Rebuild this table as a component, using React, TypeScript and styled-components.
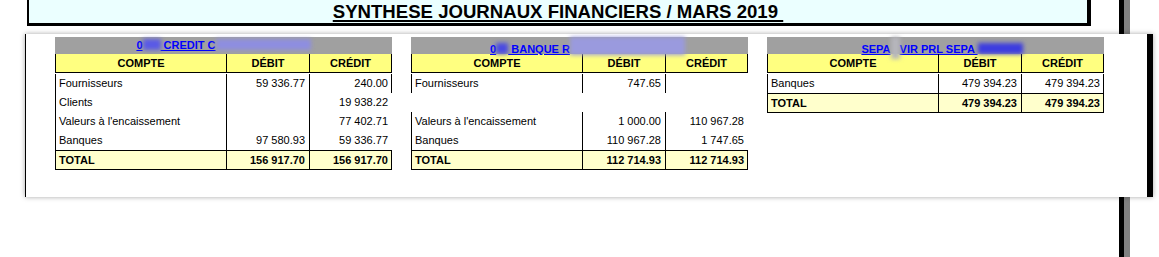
import React from "react";
import styled, { createGlobalStyle, css } from "styled-components";

const GlobalStyle = createGlobalStyle`
  html, body { margin: 0; padding: 0; background: #fff; }
  body {
    font-family: "Liberation Sans", Arial, sans-serif;
    font-size: 11px;
    color: #000;
  }
`;

const Page = styled.div`
  position: relative;
  width: 1159px;
  height: 257px;
  overflow: hidden;
`;

// window edge behind the sheet
const SideBar = styled.div`
  position: absolute;
  top: 0;
  bottom: 0;
  left: 1119px;
  width: 11px;
  box-sizing: border-box;
  border-left: 5px solid #000;
  background: #808080;
`;

const Banner = styled.div`
  margin-left: 27px;
  width: 1064px;
  height: 26px;
  box-sizing: border-box;
  background: #ebffff;
  border: solid #000;
  border-width: 0 4px 3px 2px;
  text-align: center;
`;

const Title = styled.h1`
  margin: 0;
  font-size: 18.6px;
  line-height: 23px;
  font-weight: bold;
  white-space: pre;
  text-decoration: underline;
  text-decoration-thickness: 2px;
  text-underline-offset: 2px;
`;

const Sheet = styled.div`
  position: relative;
  z-index: 1;
  margin: 8px 0 0 25px;
  width: 1128px;
  height: 163px;
  box-sizing: border-box;
  background: #fff;
  border-left: 1px solid #000;
  border-right: 6px solid #000;
  box-shadow: 0 0 5px rgba(0, 0, 0, 0.35);
  padding: 3px 0 0 29px;
  display: flex;
  gap: 19px;
  align-items: flex-start;
`;

const Journal = styled.div`
  width: 337px;
`;

const Caption = styled.div<{ $shift?: number }>`
  height: 17px;
  line-height: 17px;
  background: #a0a0a0;
  text-align: center;
  white-space: nowrap;
  padding-left: ${(p) => p.$shift ?? 0}px;
`;

const Link = styled.a`
  color: #0000ff;
  font-weight: bold;
  text-decoration: underline;
`;

// redacted part of the account label
const Blur = styled.span<{ $w: number; $c: string; $h?: number; $lift?: number }>`
  display: inline-block;
  width: ${(p) => p.$w}px;
  height: ${(p) => p.$h ?? 11}px;
  background: ${(p) => p.$c};
  filter: blur(2px);
  vertical-align: ${(p) => p.$lift ?? -1}px;
`;

type Variant = "head" | "body" | "blank" | "total";

const Line = styled.div<{ $variant: Variant }>`
  display: grid;
  grid-template-columns: 171px 83px 83px;
  height: 19px;
  line-height: 19px;
  box-sizing: border-box;

  ${(p) =>
    p.$variant === "head" &&
    css`
      background: #ffff80;
      border-bottom: 1px solid #000;
      line-height: 18px;
      font-weight: bold;
      margin-bottom: 1px;
    `}

  ${(p) =>
    p.$variant === "total" &&
    css`
      height: 20px;
      line-height: 18px;
      background: #ffffcc;
      border-top: 1px solid #000;
      border-bottom: 1px solid #000;
      font-weight: bold;
    `}
`;

const Cell = styled.div<{ $align: "left" | "center" | "right"; $edge?: boolean; $last?: boolean; $blank?: boolean }>`
  box-sizing: border-box;
  white-space: nowrap;
  overflow: hidden;
  text-align: ${(p) => p.$align};
  border-left: 1px solid ${(p) => (p.$blank ? "transparent" : "#000")};
  border-right: ${(p) => (p.$last ? `1px solid ${p.$edge ? "#000" : "transparent"}` : "none")};
  padding: ${(p) => (p.$align === "left" ? "0 0 0 3px" : p.$align === "right" ? (p.$last ? "0 3px 0 0" : "0 4px 0 0") : "0")};
`;

type Entry = { label: string; debit: string; credit: string; edge?: boolean; blank?: boolean };

type JournalData = {
  caption: React.ReactNode;
  shift?: number;
  rows: Entry[];
  total: string;
};

const journals: JournalData[] = [
  {
    caption: (
      <>
        0<Blur $w={18} $c="#5a5ae6" /> CREDIT C<Blur $w={95} $c="#8e8ee0" />
      </>
    ),
    rows: [
      { label: "Fournisseurs", debit: "59 336.77", credit: "240.00", edge: true },
      { label: "Clients", debit: "", credit: "19 938.22" },
      { label: "Valeurs à l'encaissement", debit: "", credit: "77 402.71" },
      { label: "Banques", debit: "97 580.93", credit: "59 336.77" },
    ],
    total: "156 917.70",
  },
  {
    caption: (
      <>
        0<Blur $w={12} $c="#4a4ae2" /> BANQUE R<Blur $w={115} $c="#9a9ade" $h={18} $lift={-2} />
      </>
    ),
    shift: 16,
    rows: [
      { label: "Fournisseurs", debit: "747.65", credit: "" },
      { label: "", debit: "", credit: "", blank: true },
      { label: "Valeurs à l'encaissement", debit: "1 000.00", credit: "110 967.28" },
      { label: "Banques", debit: "110 967.28", credit: "1 747.65" },
    ],
    total: "112 714.93",
  },
  {
    caption: (
      <>
        SEPA<Blur $w={9} $c="#b6b6bc" $h={22} $lift={-6} />VIR PRL SEPA <Blur $w={45} $c="#3c3ce0" />
      </>
    ),
    shift: 13,
    rows: [{ label: "Banques", debit: "479 394.23", credit: "479 394.23", edge: true }],
    total: "479 394.23",
  },
];

function JournalTable({ data }: { data: JournalData }) {
  return (
    <Journal>
      <Caption $shift={data.shift}>
        <Link>{data.caption}</Link>
      </Caption>
      <Line $variant="head">
        <Cell $align="center">COMPTE</Cell>
        <Cell $align="center">DÉBIT</Cell>
        <Cell $align="center" $last $edge>
          CRÉDIT
        </Cell>
      </Line>
      {data.rows.map((r, i) => (
        <Line key={i} $variant={r.blank ? "blank" : "body"}>
          <Cell $align="left" $blank={r.blank}>
            {r.label}
          </Cell>
          <Cell $align="right" $blank={r.blank}>
            {r.debit}
          </Cell>
          <Cell $align="right" $blank={r.blank} $last $edge={r.edge}>
            {r.credit}
          </Cell>
        </Line>
      ))}
      <Line $variant="total">
        <Cell $align="left">TOTAL</Cell>
        <Cell $align="right">{data.total}</Cell>
        <Cell $align="right" $last $edge>
          {data.total}
        </Cell>
      </Line>
    </Journal>
  );
}

export default function App() {
  return (
    <>
      <GlobalStyle />
      <Page>
        <SideBar />
        <Banner>
          <Title>SYNTHESE JOURNAUX FINANCIERS / MARS 2019 </Title>
        </Banner>
        <Sheet>
          {journals.map((j, i) => (
            <JournalTable key={i} data={j} />
          ))}
        </Sheet>
      </Page>
    </>
  );
}
